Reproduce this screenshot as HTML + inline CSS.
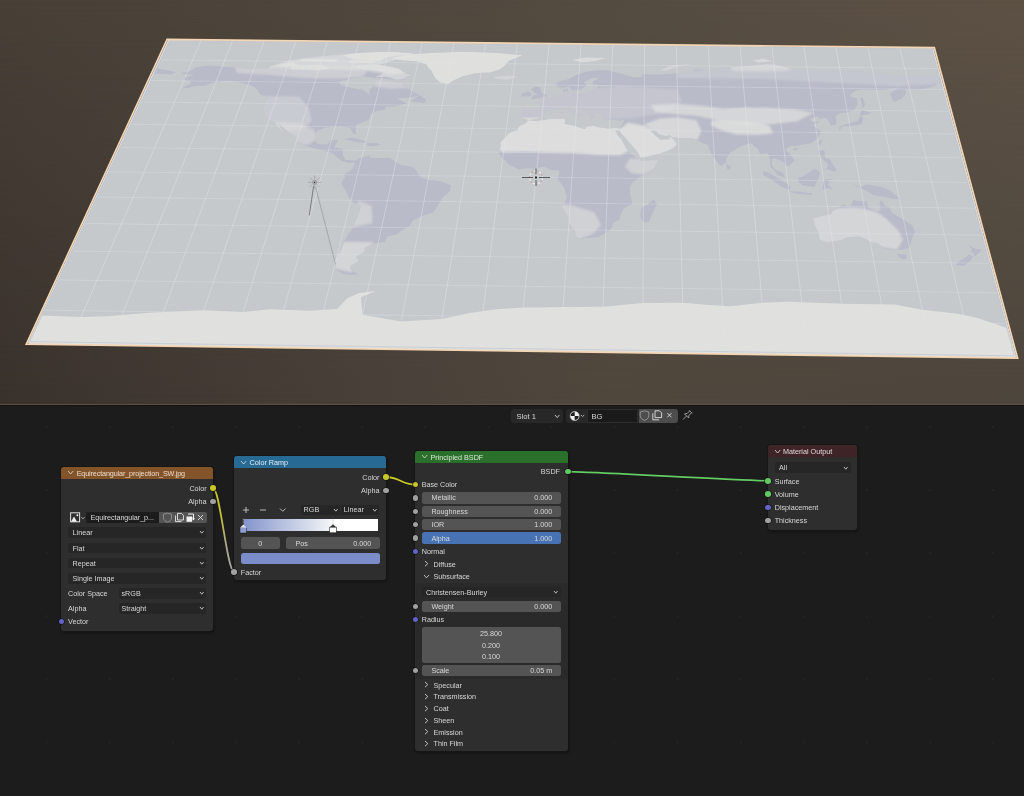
<!DOCTYPE html>
<html><head><meta charset="utf-8">
<style>
*{box-sizing:border-box;margin:0;padding:0}
html,body{width:1024px;height:796px;overflow:hidden;background:#1c1c1c;font-family:"Liberation Sans",sans-serif;}
#vp{position:absolute;left:0;top:0;width:1024px;height:404px;overflow:hidden;background:linear-gradient(90deg,#39322c 0%,#4a423a 40%,#50473d 60%,#4d463d 100%);}
#vptop{position:absolute;left:0;top:0;width:1024px;height:404px;background:linear-gradient(90deg,#484037 0%,#524a40 50%,#5d5144 100%);-webkit-mask-image:linear-gradient(180deg,#000 0%,rgba(0,0,0,0) 100%);mask-image:linear-gradient(180deg,#000 0%,rgba(0,0,0,0) 100%);}
#ov{position:absolute;left:0;top:0}
#sep{position:absolute;left:0;top:404px;width:1024px;height:2px;background:#121110}
#ne{position:absolute;left:0;top:406px;width:1024px;height:390px;background-color:#1c1c1c;background-image:radial-gradient(circle at center,#262626 0px,#232323 0.8px,rgba(28,28,28,0) 1.4px);background-size:63.1px 63.1px;background-position:15.05px -10.55px}
.t{position:absolute;font-size:7.6px;line-height:1;color:#d9d9d9;white-space:nowrap}
.r{text-align:right}
.node{position:absolute;background:#2e2e2e;border-radius:3px;box-shadow:0 0 0 1px #161616, 1px 2px 3px rgba(0,0,0,0.35)}
.hdr{position:absolute;left:0;top:0;right:0;border-radius:3px 3px 0 0}
.sock{position:absolute;width:5.6px;height:5.6px;border-radius:50%;box-shadow:0 0 0 0.6px #111}
.y{background:#c7c72a}.g{background:#a1a1a1}.p{background:#6363c7}.gr{background:#63c763}
.dd{position:absolute;background:#262626;border-radius:2.5px}
.fld{position:absolute;background:#545454;border-radius:2.5px}
</style></head><body>
<div id="vp">
<div id="vptop"></div>
<svg style="position:absolute;left:0;top:0" width="1024" height="404" viewBox="0 0 1024 404"><defs><filter id="bl" x="-5%" y="-5%" width="110%" height="110%"><feGaussianBlur stdDeviation="0.5"/></filter><filter id="bl2" x="-10%" y="-10%" width="120%" height="120%"><feGaussianBlur stdDeviation="1.3"/></filter><clipPath id="landclip"><polygon points="269.89,66.56 289.46,59.96 311.98,56.84 345.01,53.85 377.69,51.54 415.86,52.63 397.04,59.81 378.49,65.04 411.14,73.67 403.01,80.56 370.94,77.39 339.47,72.86 296.55,70.99 269.15,68.61"/><polygon points="180.44,73.15 190.00,71.18 196.09,67.11 209.75,65.48 226.42,67.03 241.20,68.02 253.78,69.13 269.40,67.93 286.20,69.49 307.38,71.11 328.96,71.63 342.64,69.44 350.90,70.91 362.11,69.66 367.69,73.18 357.87,77.25 339.22,81.24 340.39,84.79 350.58,87.75 363.22,90.04 368.72,94.42 369.84,90.12 376.06,83.08 374.69,79.82 385.52,80.36 393.93,81.87 402.36,83.37 403.91,86.23 408.77,89.13 417.63,94.26 420.35,95.01 410.18,97.79 396.68,98.36 399.69,99.85 406.67,103.59 394.82,106.39 385.68,107.02 385.08,109.53 375.62,111.35 370.18,115.02 369.04,119.52 356.32,124.68 355.66,131.58 356.08,134.37 352.88,133.40 350.75,128.44 346.52,127.16 337.57,126.44 325.87,127.38 316.75,131.11 314.45,138.85 317.55,144.07 327.87,144.51 330.14,140.61 338.43,139.92 334.16,146.96 342.94,148.98 342.71,155.05 345.40,159.93 355.18,160.38 355.11,162.49 348.63,162.90 342.05,161.03 336.19,156.59 332.49,153.00 323.75,150.82 315.00,148.80 295.05,141.75 296.52,137.07 288.81,132.32 283.45,127.64 279.47,123.77 279.40,126.06 286.17,136.95 282.49,134.10 279.53,129.13 274.98,122.19 267.85,119.08 265.12,114.53 263.30,110.04 263.48,106.33 266.39,101.22 265.81,98.45 269.88,97.62 259.83,94.61 257.22,89.54 251.10,85.19 243.95,83.69 238.09,81.79 225.37,80.65 212.51,82.63 205.88,85.39 196.82,85.99 187.13,88.02 181.33,88.67 191.44,83.09 190.16,80.96 183.91,80.18 184.04,77.38 195.01,74.71 186.34,74.61"/><polygon points="390.94,58.39 406.87,54.53 430.72,53.06 463.00,51.81 494.87,52.83 522.37,55.14 508.72,61.05 503.67,66.44 498.86,69.82 489.77,72.47 476.62,73.02 462.97,76.34 453.48,80.43 448.44,83.90 439.94,82.39 435.30,78.12 432.88,73.91 431.42,70.44 428.59,68.34 426.22,64.21 416.05,61.37 403.32,60.55"/><polygon points="374.36,64.31 391.09,66.55 399.24,68.70 404.62,73.59 410.98,74.36 403.34,79.16 396.62,79.79 386.38,76.87 375.41,77.03 385.24,72.68 374.92,70.49 360.13,68.95 352.25,66.11"/><polygon points="354.16,59.33 379.54,60.97 386.99,57.00 413.58,53.27 388.33,51.66 355.86,53.30 342.49,55.16"/><polygon points="291.68,66.12 320.34,64.39 329.87,68.61 318.42,70.55 290.52,69.54"/><polygon points="276.84,65.27 293.06,62.04 298.37,65.51 282.82,66.71"/><polygon points="349.68,59.96 375.42,60.24 374.71,62.95 348.91,62.66"/><polygon points="300.62,58.74 337.02,59.14 336.22,61.84 299.95,60.76"/><polygon points="410.53,101.29 424.73,102.92 426.11,99.43 420.67,95.59 415.93,96.98"/><polygon points="343.17,139.51 352.97,137.44 365.84,141.35 366.68,142.62 358.59,142.52 347.66,140.03"/><polygon points="366.60,142.93 377.01,143.06 380.50,144.99 372.74,146.32 366.71,145.30"/><polygon points="355.05,160.86 360.57,157.69 369.36,155.38 369.94,157.81 378.14,157.91 389.93,157.73 394.01,160.53 400.18,164.68 409.35,166.10 414.85,168.14 417.51,172.63 420.16,177.32 429.23,179.94 439.83,180.92 451.08,185.27 450.08,191.21 443.00,197.14 437.82,205.77 432.89,212.75 423.79,215.30 412.90,220.52 409.36,225.89 400.80,231.24 396.30,234.84 387.16,236.56 384.71,242.09 372.98,243.80 364.57,247.43 364.97,251.20 356.03,256.77 358.96,260.63 349.94,266.29 350.53,269.21 346.21,271.09 340.82,272.00 336.40,269.02 334.73,260.31 340.91,250.88 344.95,239.71 353.09,226.97 358.60,214.46 361.22,205.66 350.84,201.17 346.75,193.33 341.73,184.75 341.19,182.21 344.68,178.05 344.57,173.88 350.18,170.64 353.18,168.20 354.90,163.30"/><polygon points="350.39,269.79 358.40,274.19 350.43,275.06 342.93,273.98 336.16,269.98"/><polygon points="528.05,120.19 537.03,121.35 548.64,118.92 564.57,118.51 565.45,121.84 564.17,123.64 575.42,126.06 584.38,129.22 586.82,126.65 593.72,125.82 598.23,127.24 608.48,128.44 614.91,128.05 619.26,128.10 620.79,130.88 615.30,130.20 617.46,134.70 621.93,140.20 625.93,148.12 629.80,152.94 635.60,157.02 639.81,159.01 641.44,161.13 658.41,159.23 657.95,161.33 654.43,167.81 650.87,171.05 641.32,175.90 635.28,180.84 631.64,183.31 629.87,188.36 630.24,195.20 632.53,203.88 623.87,208.14 619.99,216.05 619.90,219.61 613.10,223.12 612.22,227.62 607.07,232.10 599.37,236.59 594.31,237.44 580.41,238.73 576.48,237.21 574.67,229.86 568.86,223.44 568.11,216.27 562.10,207.36 566.93,197.84 564.04,187.54 557.48,179.03 559.14,173.22 559.33,170.75 557.02,169.89 551.06,170.15 544.24,166.78 532.19,168.77 526.30,168.36 519.05,169.59 510.08,165.21 506.23,161.91 502.64,158.62 498.69,152.94 500.90,145.03 500.06,142.65 505.39,137.24 509.43,132.64 517.83,129.66 518.65,126.61 525.93,122.89"/><polygon points="654.04,198.95 656.99,205.07 654.55,208.54 648.88,221.78 643.42,222.61 640.24,216.31 641.55,207.49 647.20,204.94 650.87,201.51"/><polygon points="528.99,119.90 521.45,118.30 522.77,110.84 522.52,109.06 539.43,108.81 540.48,105.14 533.40,102.13 540.22,101.04 547.08,99.37 551.71,97.54 555.27,95.12 563.10,94.49 563.33,91.62 562.84,89.47 568.00,88.53 567.71,92.38 572.09,93.15 575.36,93.91 585.40,93.16 591.04,91.51 592.28,89.09 597.81,89.15 596.83,86.58 606.76,86.41 611.20,85.75 600.20,85.20 592.55,84.12 592.70,81.31 600.51,78.59 592.89,77.81 583.88,81.91 586.97,85.48 581.23,88.96 576.67,91.05 572.85,91.73 570.24,88.13 568.16,86.40 562.53,87.90 557.10,86.84 556.33,83.01 560.90,80.95 568.74,78.93 576.69,74.84 585.60,71.75 598.73,70.25 607.42,70.34 613.89,71.80 618.21,72.81 633.38,77.15 642.13,76.97 642.16,74.19 661.79,74.41 672.68,73.84 677.02,72.92 692.29,73.37 694.30,69.25 702.97,68.94 705.44,74.90 709.55,70.11 720.28,68.17 735.37,66.97 763.28,64.56 771.75,63.02 791.97,68.97 807.29,69.83 827.11,71.43 850.97,71.01 873.06,72.63 895.47,75.37 917.27,75.20 939.56,76.84 941.06,82.44 936.84,83.10 935.38,85.90 927.07,87.93 920.78,89.28 905.31,89.38 905.91,91.96 905.47,94.82 900.89,99.09 894.15,101.92 891.94,98.99 890.00,93.21 892.57,91.81 898.27,87.60 887.66,89.61 881.09,89.96 861.09,89.59 854.79,91.37 849.04,96.33 857.26,98.59 857.37,105.15 853.82,110.25 847.43,112.40 840.77,113.07 835.60,115.99 836.60,122.01 835.91,124.72 830.36,125.72 828.95,121.16 825.73,118.12 817.88,118.78 818.68,116.54 809.92,118.68 812.63,121.73 820.62,121.82 813.07,124.76 817.06,128.61 820.97,131.73 817.39,138.64 811.10,143.25 803.13,144.41 795.22,146.21 791.62,145.38 787.24,147.69 785.15,149.73 788.98,152.48 794.67,160.57 789.35,165.38 785.87,165.99 785.04,162.89 779.29,160.06 773.17,157.89 771.40,163.53 774.85,169.29 783.08,172.69 784.86,177.85 778.61,175.44 775.32,171.44 770.56,166.78 769.72,158.65 767.50,153.01 759.84,153.72 758.22,148.92 753.99,146.03 751.89,143.33 746.17,144.36 740.55,146.81 737.16,148.19 730.47,152.56 726.58,157.65 725.96,162.49 720.74,166.01 718.24,163.69 713.11,156.36 708.71,148.33 708.32,145.16 701.93,142.73 698.38,141.12 693.64,138.25 682.08,138.27 672.82,137.38 670.01,135.33 665.87,136.05 658.94,133.96 655.47,130.53 650.88,130.47 650.88,131.24 655.95,135.94 659.20,138.31 658.97,139.55 669.38,139.21 670.03,136.41 678.25,142.44 673.72,147.90 667.24,151.00 660.71,153.15 652.52,155.62 643.82,157.44 639.82,157.72 638.46,153.04 629.98,143.43 625.46,137.90 620.96,133.20 620.10,130.88 619.49,128.11 621.16,125.84 623.29,122.52 624.04,120.11 619.02,120.65 611.09,119.66 604.28,119.27 601.72,115.49 602.24,114.00 596.59,113.94 593.65,113.90 595.27,117.66 590.64,119.42 589.73,115.35 586.53,111.88 578.80,109.27 573.38,106.26 570.67,106.52 570.98,108.44 574.20,110.70 578.11,112.98 584.13,114.24 579.45,116.73 577.59,117.46 577.78,114.46 570.71,112.14 566.37,109.87 562.71,107.75 557.38,109.61 549.96,109.38 549.80,111.16 543.50,113.32 540.95,116.28 537.29,118.79"/><polygon points="156.69,68.04 166.53,70.22 176.53,72.13 171.15,74.44 154.13,73.55"/><polygon points="531.03,99.18 547.25,97.63 547.90,95.47 544.24,94.27 541.12,92.08 540.41,88.21 538.34,86.91 533.93,86.86 530.95,89.82 533.79,92.28 537.58,94.20 533.70,95.16 532.42,96.73"/><polygon points="530.69,96.28 531.08,92.68 527.87,91.64 522.14,93.30 521.30,96.61"/><polygon points="493.50,76.68 506.78,75.44 515.42,76.23 516.33,77.64 506.20,79.77 496.44,79.09"/><polygon points="571.28,59.71 586.50,57.19 605.77,58.08 594.86,61.33 581.85,62.54"/><polygon points="659.57,70.24 670.35,65.57 694.06,63.38 676.88,67.00 666.10,71.00"/><polygon points="752.07,60.37 762.64,58.47 773.71,61.28 758.75,62.47"/><polygon points="839.27,131.18 841.94,126.62 849.84,125.95 861.01,124.57 863.44,119.31 862.27,115.55 859.60,117.02 858.02,120.75 852.59,122.20 844.99,124.38 839.57,126.14"/><polygon points="859.32,115.52 861.65,109.90 871.22,112.68 867.12,114.86"/><polygon points="862.58,108.88 865.10,104.50 862.57,97.21 860.47,97.91 861.73,104.46"/><polygon points="818.66,144.13 819.89,139.92 822.26,140.26 820.64,144.94"/><polygon points="792.30,149.02 796.58,147.80 797.85,148.61 795.78,150.65"/><polygon points="726.48,163.31 731.00,167.11 729.27,169.55 726.83,168.70"/><polygon points="763.36,170.79 770.04,173.35 785.41,182.71 790.62,186.14 789.91,190.37 781.06,186.87 771.92,180.03 763.04,174.92"/><polygon points="790.01,191.22 800.98,191.87 812.06,193.21 812.29,194.92 798.81,193.90 790.11,192.08"/><polygon points="798.02,177.85 801.50,177.06 808.13,173.00 814.71,168.96 819.95,172.32 818.51,178.93 815.61,183.92 814.88,187.29 802.58,185.45 798.54,182.03"/><polygon points="822.50,189.93 823.43,179.83 835.18,178.31 827.16,180.71 831.02,182.44 827.66,184.07 833.40,190.07 827.01,187.78"/><polygon points="850.28,182.68 860.66,187.02 867.39,184.23 882.42,187.29 891.75,191.65 900.65,199.48 891.92,198.50 881.82,196.66 871.76,194.81 868.85,192.21"/><polygon points="819.12,150.45 824.51,150.52 824.89,157.72 829.85,159.39 836.13,169.23 835.33,171.68 826.61,169.11 828.24,164.23 822.78,159.30 819.24,154.44"/><polygon points="813.02,218.53 815.22,225.73 818.71,233.04 819.59,239.47 826.29,242.33 839.86,240.29 847.00,237.62 859.35,236.31 870.41,241.99 878.17,243.01 884.29,248.68 894.57,249.38 902.29,249.86 909.54,248.08 911.58,239.75 914.86,231.55 912.32,225.55 900.78,217.88 892.45,213.34 889.25,207.15 884.73,205.35 881.20,199.75 879.49,203.54 880.82,210.55 876.06,211.37 868.76,207.76 866.92,201.64 853.26,200.26 850.66,206.66 843.01,204.82 832.90,210.82 830.96,214.32 820.16,216.49"/><polygon points="897.25,253.93 906.52,254.43 906.65,258.79 902.95,259.50 898.50,256.40"/><polygon points="965.84,243.05 971.41,247.03 975.72,248.95 982.18,249.41 979.15,252.37 975.12,256.47 973.12,252.67 970.93,252.08 971.90,248.90"/><polygon points="968.75,254.50 973.33,256.45 970.97,260.21 966.79,263.98 962.16,266.03 955.42,264.79 959.64,261.02 966.30,256.92"/></clipPath></defs><polygon points="167.9,40.1 933.5,48.2 1016.5,357.2 27.5,343.3" fill="#d9dbde"/><polygon points="169.70,40.03 931.89,48.35 1014.70,356.11 29.42,341.93" fill="#c5c9cc"/><g filter="url(#bl)"><polygon points="269.89,66.56 289.46,59.96 311.98,56.84 345.01,53.85 377.69,51.54 415.86,52.63 397.04,59.81 378.49,65.04 411.14,73.67 403.01,80.56 370.94,77.39 339.47,72.86 296.55,70.99 269.15,68.61" fill="#b9bbc9"/><polygon points="180.44,73.15 190.00,71.18 196.09,67.11 209.75,65.48 226.42,67.03 241.20,68.02 253.78,69.13 269.40,67.93 286.20,69.49 307.38,71.11 328.96,71.63 342.64,69.44 350.90,70.91 362.11,69.66 367.69,73.18 357.87,77.25 339.22,81.24 340.39,84.79 350.58,87.75 363.22,90.04 368.72,94.42 369.84,90.12 376.06,83.08 374.69,79.82 385.52,80.36 393.93,81.87 402.36,83.37 403.91,86.23 408.77,89.13 417.63,94.26 420.35,95.01 410.18,97.79 396.68,98.36 399.69,99.85 406.67,103.59 394.82,106.39 385.68,107.02 385.08,109.53 375.62,111.35 370.18,115.02 369.04,119.52 356.32,124.68 355.66,131.58 356.08,134.37 352.88,133.40 350.75,128.44 346.52,127.16 337.57,126.44 325.87,127.38 316.75,131.11 314.45,138.85 317.55,144.07 327.87,144.51 330.14,140.61 338.43,139.92 334.16,146.96 342.94,148.98 342.71,155.05 345.40,159.93 355.18,160.38 355.11,162.49 348.63,162.90 342.05,161.03 336.19,156.59 332.49,153.00 323.75,150.82 315.00,148.80 295.05,141.75 296.52,137.07 288.81,132.32 283.45,127.64 279.47,123.77 279.40,126.06 286.17,136.95 282.49,134.10 279.53,129.13 274.98,122.19 267.85,119.08 265.12,114.53 263.30,110.04 263.48,106.33 266.39,101.22 265.81,98.45 269.88,97.62 259.83,94.61 257.22,89.54 251.10,85.19 243.95,83.69 238.09,81.79 225.37,80.65 212.51,82.63 205.88,85.39 196.82,85.99 187.13,88.02 181.33,88.67 191.44,83.09 190.16,80.96 183.91,80.18 184.04,77.38 195.01,74.71 186.34,74.61" fill="#b9bbc9"/><polygon points="390.94,58.39 406.87,54.53 430.72,53.06 463.00,51.81 494.87,52.83 522.37,55.14 508.72,61.05 503.67,66.44 498.86,69.82 489.77,72.47 476.62,73.02 462.97,76.34 453.48,80.43 448.44,83.90 439.94,82.39 435.30,78.12 432.88,73.91 431.42,70.44 428.59,68.34 426.22,64.21 416.05,61.37 403.32,60.55" fill="#b9bbc9"/><polygon points="374.36,64.31 391.09,66.55 399.24,68.70 404.62,73.59 410.98,74.36 403.34,79.16 396.62,79.79 386.38,76.87 375.41,77.03 385.24,72.68 374.92,70.49 360.13,68.95 352.25,66.11" fill="#b9bbc9"/><polygon points="354.16,59.33 379.54,60.97 386.99,57.00 413.58,53.27 388.33,51.66 355.86,53.30 342.49,55.16" fill="#b9bbc9"/><polygon points="291.68,66.12 320.34,64.39 329.87,68.61 318.42,70.55 290.52,69.54" fill="#b9bbc9"/><polygon points="276.84,65.27 293.06,62.04 298.37,65.51 282.82,66.71" fill="#b9bbc9"/><polygon points="349.68,59.96 375.42,60.24 374.71,62.95 348.91,62.66" fill="#b9bbc9"/><polygon points="300.62,58.74 337.02,59.14 336.22,61.84 299.95,60.76" fill="#b9bbc9"/><polygon points="410.53,101.29 424.73,102.92 426.11,99.43 420.67,95.59 415.93,96.98" fill="#b9bbc9"/><polygon points="343.17,139.51 352.97,137.44 365.84,141.35 366.68,142.62 358.59,142.52 347.66,140.03" fill="#b9bbc9"/><polygon points="366.60,142.93 377.01,143.06 380.50,144.99 372.74,146.32 366.71,145.30" fill="#b9bbc9"/><polygon points="355.05,160.86 360.57,157.69 369.36,155.38 369.94,157.81 378.14,157.91 389.93,157.73 394.01,160.53 400.18,164.68 409.35,166.10 414.85,168.14 417.51,172.63 420.16,177.32 429.23,179.94 439.83,180.92 451.08,185.27 450.08,191.21 443.00,197.14 437.82,205.77 432.89,212.75 423.79,215.30 412.90,220.52 409.36,225.89 400.80,231.24 396.30,234.84 387.16,236.56 384.71,242.09 372.98,243.80 364.57,247.43 364.97,251.20 356.03,256.77 358.96,260.63 349.94,266.29 350.53,269.21 346.21,271.09 340.82,272.00 336.40,269.02 334.73,260.31 340.91,250.88 344.95,239.71 353.09,226.97 358.60,214.46 361.22,205.66 350.84,201.17 346.75,193.33 341.73,184.75 341.19,182.21 344.68,178.05 344.57,173.88 350.18,170.64 353.18,168.20 354.90,163.30" fill="#b9bbc9"/><polygon points="350.39,269.79 358.40,274.19 350.43,275.06 342.93,273.98 336.16,269.98" fill="#b9bbc9"/><polygon points="528.05,120.19 537.03,121.35 548.64,118.92 564.57,118.51 565.45,121.84 564.17,123.64 575.42,126.06 584.38,129.22 586.82,126.65 593.72,125.82 598.23,127.24 608.48,128.44 614.91,128.05 619.26,128.10 620.79,130.88 615.30,130.20 617.46,134.70 621.93,140.20 625.93,148.12 629.80,152.94 635.60,157.02 639.81,159.01 641.44,161.13 658.41,159.23 657.95,161.33 654.43,167.81 650.87,171.05 641.32,175.90 635.28,180.84 631.64,183.31 629.87,188.36 630.24,195.20 632.53,203.88 623.87,208.14 619.99,216.05 619.90,219.61 613.10,223.12 612.22,227.62 607.07,232.10 599.37,236.59 594.31,237.44 580.41,238.73 576.48,237.21 574.67,229.86 568.86,223.44 568.11,216.27 562.10,207.36 566.93,197.84 564.04,187.54 557.48,179.03 559.14,173.22 559.33,170.75 557.02,169.89 551.06,170.15 544.24,166.78 532.19,168.77 526.30,168.36 519.05,169.59 510.08,165.21 506.23,161.91 502.64,158.62 498.69,152.94 500.90,145.03 500.06,142.65 505.39,137.24 509.43,132.64 517.83,129.66 518.65,126.61 525.93,122.89" fill="#b9bbc9"/><polygon points="654.04,198.95 656.99,205.07 654.55,208.54 648.88,221.78 643.42,222.61 640.24,216.31 641.55,207.49 647.20,204.94 650.87,201.51" fill="#b9bbc9"/><polygon points="528.99,119.90 521.45,118.30 522.77,110.84 522.52,109.06 539.43,108.81 540.48,105.14 533.40,102.13 540.22,101.04 547.08,99.37 551.71,97.54 555.27,95.12 563.10,94.49 563.33,91.62 562.84,89.47 568.00,88.53 567.71,92.38 572.09,93.15 575.36,93.91 585.40,93.16 591.04,91.51 592.28,89.09 597.81,89.15 596.83,86.58 606.76,86.41 611.20,85.75 600.20,85.20 592.55,84.12 592.70,81.31 600.51,78.59 592.89,77.81 583.88,81.91 586.97,85.48 581.23,88.96 576.67,91.05 572.85,91.73 570.24,88.13 568.16,86.40 562.53,87.90 557.10,86.84 556.33,83.01 560.90,80.95 568.74,78.93 576.69,74.84 585.60,71.75 598.73,70.25 607.42,70.34 613.89,71.80 618.21,72.81 633.38,77.15 642.13,76.97 642.16,74.19 661.79,74.41 672.68,73.84 677.02,72.92 692.29,73.37 694.30,69.25 702.97,68.94 705.44,74.90 709.55,70.11 720.28,68.17 735.37,66.97 763.28,64.56 771.75,63.02 791.97,68.97 807.29,69.83 827.11,71.43 850.97,71.01 873.06,72.63 895.47,75.37 917.27,75.20 939.56,76.84 941.06,82.44 936.84,83.10 935.38,85.90 927.07,87.93 920.78,89.28 905.31,89.38 905.91,91.96 905.47,94.82 900.89,99.09 894.15,101.92 891.94,98.99 890.00,93.21 892.57,91.81 898.27,87.60 887.66,89.61 881.09,89.96 861.09,89.59 854.79,91.37 849.04,96.33 857.26,98.59 857.37,105.15 853.82,110.25 847.43,112.40 840.77,113.07 835.60,115.99 836.60,122.01 835.91,124.72 830.36,125.72 828.95,121.16 825.73,118.12 817.88,118.78 818.68,116.54 809.92,118.68 812.63,121.73 820.62,121.82 813.07,124.76 817.06,128.61 820.97,131.73 817.39,138.64 811.10,143.25 803.13,144.41 795.22,146.21 791.62,145.38 787.24,147.69 785.15,149.73 788.98,152.48 794.67,160.57 789.35,165.38 785.87,165.99 785.04,162.89 779.29,160.06 773.17,157.89 771.40,163.53 774.85,169.29 783.08,172.69 784.86,177.85 778.61,175.44 775.32,171.44 770.56,166.78 769.72,158.65 767.50,153.01 759.84,153.72 758.22,148.92 753.99,146.03 751.89,143.33 746.17,144.36 740.55,146.81 737.16,148.19 730.47,152.56 726.58,157.65 725.96,162.49 720.74,166.01 718.24,163.69 713.11,156.36 708.71,148.33 708.32,145.16 701.93,142.73 698.38,141.12 693.64,138.25 682.08,138.27 672.82,137.38 670.01,135.33 665.87,136.05 658.94,133.96 655.47,130.53 650.88,130.47 650.88,131.24 655.95,135.94 659.20,138.31 658.97,139.55 669.38,139.21 670.03,136.41 678.25,142.44 673.72,147.90 667.24,151.00 660.71,153.15 652.52,155.62 643.82,157.44 639.82,157.72 638.46,153.04 629.98,143.43 625.46,137.90 620.96,133.20 620.10,130.88 619.49,128.11 621.16,125.84 623.29,122.52 624.04,120.11 619.02,120.65 611.09,119.66 604.28,119.27 601.72,115.49 602.24,114.00 596.59,113.94 593.65,113.90 595.27,117.66 590.64,119.42 589.73,115.35 586.53,111.88 578.80,109.27 573.38,106.26 570.67,106.52 570.98,108.44 574.20,110.70 578.11,112.98 584.13,114.24 579.45,116.73 577.59,117.46 577.78,114.46 570.71,112.14 566.37,109.87 562.71,107.75 557.38,109.61 549.96,109.38 549.80,111.16 543.50,113.32 540.95,116.28 537.29,118.79" fill="#b9bbc9"/><polygon points="156.69,68.04 166.53,70.22 176.53,72.13 171.15,74.44 154.13,73.55" fill="#b9bbc9"/><polygon points="531.03,99.18 547.25,97.63 547.90,95.47 544.24,94.27 541.12,92.08 540.41,88.21 538.34,86.91 533.93,86.86 530.95,89.82 533.79,92.28 537.58,94.20 533.70,95.16 532.42,96.73" fill="#b9bbc9"/><polygon points="530.69,96.28 531.08,92.68 527.87,91.64 522.14,93.30 521.30,96.61" fill="#b9bbc9"/><polygon points="493.50,76.68 506.78,75.44 515.42,76.23 516.33,77.64 506.20,79.77 496.44,79.09" fill="#b9bbc9"/><polygon points="571.28,59.71 586.50,57.19 605.77,58.08 594.86,61.33 581.85,62.54" fill="#b9bbc9"/><polygon points="659.57,70.24 670.35,65.57 694.06,63.38 676.88,67.00 666.10,71.00" fill="#b9bbc9"/><polygon points="752.07,60.37 762.64,58.47 773.71,61.28 758.75,62.47" fill="#b9bbc9"/><polygon points="839.27,131.18 841.94,126.62 849.84,125.95 861.01,124.57 863.44,119.31 862.27,115.55 859.60,117.02 858.02,120.75 852.59,122.20 844.99,124.38 839.57,126.14" fill="#b9bbc9"/><polygon points="859.32,115.52 861.65,109.90 871.22,112.68 867.12,114.86" fill="#b9bbc9"/><polygon points="862.58,108.88 865.10,104.50 862.57,97.21 860.47,97.91 861.73,104.46" fill="#b9bbc9"/><polygon points="818.66,144.13 819.89,139.92 822.26,140.26 820.64,144.94" fill="#b9bbc9"/><polygon points="792.30,149.02 796.58,147.80 797.85,148.61 795.78,150.65" fill="#b9bbc9"/><polygon points="726.48,163.31 731.00,167.11 729.27,169.55 726.83,168.70" fill="#b9bbc9"/><polygon points="763.36,170.79 770.04,173.35 785.41,182.71 790.62,186.14 789.91,190.37 781.06,186.87 771.92,180.03 763.04,174.92" fill="#b9bbc9"/><polygon points="790.01,191.22 800.98,191.87 812.06,193.21 812.29,194.92 798.81,193.90 790.11,192.08" fill="#b9bbc9"/><polygon points="798.02,177.85 801.50,177.06 808.13,173.00 814.71,168.96 819.95,172.32 818.51,178.93 815.61,183.92 814.88,187.29 802.58,185.45 798.54,182.03" fill="#b9bbc9"/><polygon points="822.50,189.93 823.43,179.83 835.18,178.31 827.16,180.71 831.02,182.44 827.66,184.07 833.40,190.07 827.01,187.78" fill="#b9bbc9"/><polygon points="850.28,182.68 860.66,187.02 867.39,184.23 882.42,187.29 891.75,191.65 900.65,199.48 891.92,198.50 881.82,196.66 871.76,194.81 868.85,192.21" fill="#b9bbc9"/><polygon points="819.12,150.45 824.51,150.52 824.89,157.72 829.85,159.39 836.13,169.23 835.33,171.68 826.61,169.11 828.24,164.23 822.78,159.30 819.24,154.44" fill="#b9bbc9"/><polygon points="813.02,218.53 815.22,225.73 818.71,233.04 819.59,239.47 826.29,242.33 839.86,240.29 847.00,237.62 859.35,236.31 870.41,241.99 878.17,243.01 884.29,248.68 894.57,249.38 902.29,249.86 909.54,248.08 911.58,239.75 914.86,231.55 912.32,225.55 900.78,217.88 892.45,213.34 889.25,207.15 884.73,205.35 881.20,199.75 879.49,203.54 880.82,210.55 876.06,211.37 868.76,207.76 866.92,201.64 853.26,200.26 850.66,206.66 843.01,204.82 832.90,210.82 830.96,214.32 820.16,216.49" fill="#b9bbc9"/><polygon points="897.25,253.93 906.52,254.43 906.65,258.79 902.95,259.50 898.50,256.40" fill="#b9bbc9"/><polygon points="965.84,243.05 971.41,247.03 975.72,248.95 982.18,249.41 979.15,252.37 975.12,256.47 973.12,252.67 970.93,252.08 971.90,248.90" fill="#b9bbc9"/><polygon points="968.75,254.50 973.33,256.45 970.97,260.21 966.79,263.98 962.16,266.03 955.42,264.79 959.64,261.02 966.30,256.92" fill="#b9bbc9"/></g><g clip-path="url(#landclip)"><g filter="url(#bl2)"><polygon points="519.00,119.78 520.41,107.85 532.44,100.66 555.52,92.25 589.01,88.34 622.22,85.88 677.42,89.35 682.18,100.93 666.69,112.52 632.71,118.10 598.53,120.71 564.67,117.30" fill="#dedfdd" opacity="0.3"/><polygon points="677.01,72.50 720.24,67.49 763.07,62.52 850.58,68.94 938.81,74.06 941.44,83.85 897.94,86.18 831.16,82.60 764.82,79.05 720.96,78.55 677.15,78.06" fill="#dedfdd" opacity="0.35"/><polygon points="266.32,64.47 289.69,59.29 312.19,56.17 345.21,53.18 377.86,50.88 420.27,52.01 401.33,59.85 382.97,64.41 411.45,72.29 393.42,74.86 361.92,70.35 329.66,69.29 297.46,68.24 269.65,67.24" fill="#dedfdd" opacity="0.75"/><polygon points="492.45,147.30 495.04,128.62 519.18,118.27 564.67,117.30 586.99,123.61 616.59,125.48 623.26,133.22 632.21,148.99 620.37,155.23 596.93,154.94 573.60,153.06 550.21,152.77 526.92,151.69 503.47,152.20" fill="#dedfdd" opacity="0.92"/><polygon points="618.75,130.09 632.23,147.40 639.11,158.67 662.63,157.35 678.77,144.81 671.65,136.90 655.47,130.53 644.02,125.80 628.08,122.58" fill="#dedfdd" opacity="0.92"/><polygon points="644.03,124.28 660.08,133.66 674.00,138.48 697.19,140.32 701.41,131.07 696.38,120.36 678.10,117.14 659.96,118.42" fill="#dedfdd" opacity="0.8"/><polygon points="650.88,104.95 677.77,103.80 700.27,105.52 722.93,108.73 745.34,107.52 767.86,107.78 795.09,109.57 813.59,112.75 796.66,121.54 769.61,124.25 746.88,125.50 723.80,122.19 712.24,119.04 696.20,115.85 673.50,114.09 655.39,112.39" fill="#dedfdd" opacity="0.75"/><polygon points="804.11,216.64 823.17,211.57 837.42,208.24 852.04,207.55 862.03,208.55 872.19,210.44 880.26,214.07 889.08,221.30 898.37,230.43 902.74,239.64 897.19,249.79 878.85,246.74 862.35,239.11 845.26,242.58 815.16,244.04 805.47,227.41" fill="#dedfdd" opacity="0.72"/><polygon points="558.03,202.93 577.34,206.67 594.24,212.17 601.11,224.76 593.23,233.75 575.25,240.89 566.19,226.12" fill="#dedfdd" opacity="0.6"/><polygon points="265.96,96.12 299.20,96.51 308.88,108.34 311.52,121.87 302.36,129.40 283.09,132.25 267.92,122.87 260.80,110.75" fill="#dedfdd" opacity="0.45"/><polygon points="338.21,241.48 373.40,241.94 366.62,260.74 351.12,272.14 331.51,267.98" fill="#dedfdd" opacity="0.7"/><polygon points="358.34,200.39 371.71,205.80 372.54,223.60 351.85,226.95" fill="#dedfdd" opacity="0.6"/><polygon points="272.97,121.41 299.70,123.25 313.78,129.53 317.91,138.89 306.80,145.05 293.90,141.74 282.59,133.80 275.98,126.02" fill="#dedfdd" opacity="0.55"/><polygon points="233.80,64.79 287.60,65.39 341.47,65.99 368.78,69.04 362.23,77.30 337.85,78.42 305.14,78.05 266.93,74.82 237.07,73.09" fill="#dedfdd" opacity="0.55"/><polygon points="370.58,78.79 400.83,80.54 407.99,87.70 390.04,88.92 373.14,85.88" fill="#dedfdd" opacity="0.5"/><polygon points="712.32,120.55 746.49,120.95 769.77,125.77 772.88,133.46 759.20,134.85 736.13,134.57 719.71,129.76 710.28,125.06" fill="#dedfdd" opacity="0.85"/><polygon points="730.68,62.16 763.07,62.52 796.04,66.97 785.71,70.96 753.12,71.29 731.29,70.36" fill="#dedfdd" opacity="0.6"/><polygon points="629.70,158.56 641.46,158.70 660.29,158.93 655.62,168.64 643.71,175.10 631.81,173.30 624.81,166.63" fill="#dedfdd" opacity="0.6"/></g></g><path d="M201.20 40.37L70.03 342.51 M232.71 40.72L110.68 343.10 M264.25 41.06L151.37 343.68 M295.82 41.41L192.10 344.27 M327.40 41.75L232.86 344.85 M359.01 42.10L273.67 345.44 M390.64 42.44L314.51 346.03 M422.30 42.79L355.39 346.62 M453.97 43.13L396.31 347.21 M485.67 43.48L437.26 347.80 M517.40 43.83L478.26 348.39 M549.14 44.17L519.29 348.98 M580.91 44.52L560.36 349.57 M612.70 44.87L601.47 350.16 M644.52 45.21L642.62 350.75 M676.35 45.56L683.81 351.35 M708.22 45.91L725.04 351.94 M740.10 46.26L766.30 352.53 M772.01 46.61L807.60 353.13 M803.94 46.95L848.95 353.72 M835.89 47.30L890.33 354.32 M867.87 47.65L931.75 354.92 M899.87 48.00L973.21 355.51" stroke="#e6e8ec" stroke-width="1" fill="none" opacity="0.42"/><path d="M160.48 59.88L937.32 68.54 M150.89 80.51L942.97 89.53 M140.92 101.96L948.85 111.36 M130.55 124.29L954.96 134.09 M119.74 147.54L961.33 157.77 M108.48 171.78L967.98 182.46 M96.73 197.06L974.91 208.24 M84.46 223.47L982.16 235.17 M71.63 251.07L989.74 263.33 M58.21 279.95L997.67 292.81 M44.16 310.20L1005.98 323.70" stroke="#e6e8ec" stroke-width="0.8" fill="none" opacity="0.38"/><g filter="url(#bl)"><polygon points="390.94,58.39 406.87,54.53 430.72,53.06 463.00,51.81 494.87,52.83 522.37,55.14 508.72,61.05 503.67,66.44 498.86,69.82 489.77,72.47 476.62,73.02 462.97,76.34 453.48,80.43 448.44,83.90 439.94,82.39 435.30,78.12 432.88,73.91 431.42,70.44 428.59,68.34 426.22,64.21 416.05,61.37 403.32,60.55" fill="#e2e2df" opacity="0.93"/><polygon points="28.41,344.10 1015.30,358.33 1007.12,327.93 977.67,318.07 957.88,313.64 922.33,309.64 894.76,304.54 841.62,303.81 788.40,301.64 762.04,302.71 730.49,306.36 709.20,305.04 682.62,302.63 642.92,303.10 603.07,306.64 563.22,307.12 523.35,307.59 496.58,309.28 469.46,313.05 441.86,318.92 401.18,321.50 362.43,314.67 361.01,297.16 375.53,290.90 359.30,293.09 347.65,297.99 337.06,309.12 310.03,310.82 270.56,309.23 243.13,311.96 203.71,310.37 149.59,312.73 108.12,316.32 81.11,316.99 41.75,315.39" fill="#e2e2df" opacity="0.93"/><polygon points="354.16,59.33 379.54,60.97 386.99,57.00 413.58,53.27 388.33,51.66 355.86,53.30 342.49,55.16" fill="#e2e2df" opacity="0.85"/><polygon points="349.68,59.96 375.42,60.24 374.71,62.95 348.91,62.66" fill="#e2e2df" opacity="0.75"/><polygon points="300.62,58.74 337.02,59.14 336.22,61.84 299.95,60.76" fill="#e2e2df" opacity="0.8"/><polygon points="571.28,59.71 586.50,57.19 605.77,58.08 594.86,61.33 581.85,62.54" fill="#e2e2df" opacity="0.8"/><polygon points="752.07,60.37 762.64,58.47 773.71,61.28 758.75,62.47" fill="#e2e2df" opacity="0.7"/><polygon points="291.68,66.12 320.34,64.39 329.87,68.61 318.42,70.55 290.52,69.54" fill="#e2e2df" opacity="0.65"/><polygon points="276.84,65.27 293.06,62.04 298.37,65.51 282.82,66.71" fill="#e2e2df" opacity="0.7"/><polygon points="374.36,64.31 391.09,66.55 399.24,68.70 404.62,73.59 410.98,74.36 403.34,79.16 396.62,79.79 386.38,76.87 375.41,77.03 385.24,72.68 374.92,70.49 360.13,68.95 352.25,66.11" fill="#e2e2df" opacity="0.6"/><polygon points="659.57,70.24 670.35,65.57 694.06,63.38 676.88,67.00 666.10,71.00" fill="#e2e2df" opacity="0.6"/><polygon points="493.50,76.68 506.78,75.44 515.42,76.23 516.33,77.64 506.20,79.77 496.44,79.09" fill="#e2e2df" opacity="0.6"/></g><polygon points="169.89,40.19 931.67,48.51 1014.28,355.83 29.88,341.66" fill="none" stroke="#b9c3d2" stroke-width="0.8" opacity="0.8"/></svg>
<svg id="ov" width="1024" height="404">
<polygon points="167.1,39.4 934.3,47.6 1017.6,358.2 26.3,344.1" fill="none" stroke="#f4d6b4" stroke-width="1.7"/>
<!-- light -->
<g stroke="#4a4a4a">
<line x1="313.6" y1="186" x2="309.3" y2="215.4" stroke-width="0.8" opacity="0.75"/>
<line x1="315.6" y1="187" x2="335.6" y2="264.5" stroke-width="0.5" opacity="0.55"/>
</g>
<g stroke="#777" stroke-width="0.5" opacity="0.75">
<path d="M314.6 175.5v4M314.6 185v4M307.8 182.3h4M317.4 182.3h4M309.8 177.5l2.6 2.6M316.8 184.5l2.6 2.6M319.4 177.5l-2.6 2.6M312.4 184.5l-2.6 2.6"/>
</g>
<circle cx="314.6" cy="182.3" r="2" fill="none" stroke="#666" stroke-width="0.5"/>
<circle cx="314.6" cy="182.3" r="0.9" fill="#3a3a3a"/>
<!-- 3d cursor -->
<circle cx="536" cy="177.5" r="6.5" fill="none" stroke="#f4f0f0" stroke-width="1.2" stroke-dasharray="3 2.5" opacity="0.8"/>
<circle cx="536" cy="177.5" r="6.5" fill="none" stroke="#c86060" stroke-width="1.2" stroke-dasharray="2.5 3" stroke-dashoffset="3" opacity="0.35"/>
<path d="M522 177.5h11M539 177.5h11M536 168.4v6M536 180v6" stroke="#333" stroke-width="0.9" opacity="0.85"/>
<rect x="535" y="176.5" width="2" height="2" fill="#222"/>
</svg>
</div>
<div id="sep"></div><div style="position:absolute;left:0;top:403.6px;width:1024px;height:1px;background:#5a5349"></div>
<div id="ne"></div>
<div id="nodes" style="position:absolute;left:0;top:0;width:1024px;height:796px;will-change:transform">
<svg style="position:absolute;left:0;top:406px" width="1024" height="390" viewBox="0 406 1024 390">
<path d="M213 487.8C220 487.8 227 571.8 234.1 571.8" fill="none" stroke="#111" stroke-width="2.6" opacity="0.6"/>
<path d="M213 487.8C220 487.8 227 571.8 234.1 571.8" fill="none" stroke="url(#lg1)" stroke-width="1.8"/>
<path d="M385.8 477C400 477 401 484.7 415.5 484.7" fill="none" stroke="#111" stroke-width="2.6" opacity="0.6"/>
<path d="M385.8 477C400 477 401 484.7 415.5 484.7" fill="none" stroke="#c7c72a" stroke-width="1.8"/>
<path d="M568 471.7C590 471.7 745 480.8 768 480.8" fill="none" stroke="#111" stroke-width="2.6" opacity="0.6"/>
<path d="M568 471.7C590 471.7 745 480.8 768 480.8" fill="none" stroke="#66cc66" stroke-width="1.7"/>
<defs><linearGradient id="lg1" x1="0" y1="487" x2="0" y2="572" gradientUnits="userSpaceOnUse"><stop offset="0" stop-color="#c7c72a"/><stop offset="0.35" stop-color="#c0c03a"/><stop offset="0.7" stop-color="#a9a98f"/><stop offset="1" stop-color="#a6a6a6"/></linearGradient></defs>
</svg>
<div class="node" style="position:absolute;left:61.00px;top:467.00px;width:152.00px;height:163.50px;"></div>
<div class="hdr" style="position:absolute;left:61.00px;top:467.00px;width:152.00px;height:12.20px;background:#83532a;position:absolute;"></div>
<svg style="position:absolute;left:67.40px;top:470.40px" width="7.2" height="5"><path d="M1 1L3.6 4L6.2 1" fill="none" stroke="#d0d0d0" stroke-width="0.9"/></svg>
<div class="t" style="top:470.11px;font-size:7.2px;color:#ecdccb;left:76.70px;letter-spacing:-0.12px;">Equirectangular_projection_SW.jpg</div>
<div class="t" style="top:484.81px;font-size:7.2px;left:-93.40px;width:300px;text-align:right;">Color</div>
<div class="sock y" style="left:210.20px;top:485.00px"></div>
<div class="t" style="top:497.71px;font-size:7.2px;left:-93.40px;width:300px;text-align:right;">Alpha</div>
<div class="sock g" style="left:210.20px;top:498.50px"></div>
<div class="" style="position:absolute;left:85.80px;top:512.00px;width:72.95px;height:10.60px;background:#1c1c1c;border-radius:2px 0 0 2px;"></div>
<div class="" style="position:absolute;left:158.75px;top:512.00px;width:48.05px;height:10.60px;background:#545454;border-radius:0 2px 2px 0;"></div>
<svg style="position:absolute;left:69px;top:511px" width="18" height="13">
<rect x="1.6" y="1.8" width="9" height="9" fill="none" stroke="#e0e0e0" stroke-width="1"/>
<path d="M2 10.8L5 5.6L8 10.8Z" fill="#f0f0f0"/><circle cx="8.3" cy="4.2" r="1" fill="#f0f0f0"/>
<path d="M12.5 6.2L14 7.8L15.5 6.2" fill="none" stroke="#d0d0d0" stroke-width="0.8"/></svg>
<div class="t" style="top:514.11px;font-size:7.2px;left:90.50px;letter-spacing:-0.05px;">Equirectangular_p...</div>
<svg style="position:absolute;left:158.75px;top:512px" width="48" height="11">
<path d="M4.5 2.2L8.5 1.2L12.5 2.2V6C12.5 8 10.5 9.5 8.5 10.2C6.5 9.5 4.5 8 4.5 6Z" fill="none" stroke="#9a9a9a" stroke-width="0.8"/>
<path d="M16.5 3.5V9.6H22.5M18.5 1.4H22.5L24.5 3.4V8H18.5Z" fill="none" stroke="#e8e8e8" stroke-width="0.9"/>
<path d="M27.5 4.5H33V9.8H27.5Z" fill="#f2f2f2"/><path d="M29 2H34.5V7.5" fill="none" stroke="#f2f2f2" stroke-width="1"/><path d="M33.5 5L36 6.8L33.5 8.6Z" fill="#f2f2f2"/>
<path d="M39 3L44 8M44 3L39 8" stroke="#e0e0e0" stroke-width="0.9"/></svg>
<div class="dd" style="position:absolute;left:68.25px;top:527.00px;width:138.15px;height:10.50px;"></div>
<div class="t" style="top:529.01px;font-size:7.2px;left:72.55px;">Linear</div>
<svg style="position:absolute;left:198.80px;top:530.45px" width="5.6" height="4.2"><path d="M1 1L2.8 3.2L4.6 1" fill="none" stroke="#d0d0d0" stroke-width="0.9"/></svg>
<div class="dd" style="position:absolute;left:68.25px;top:542.60px;width:138.15px;height:10.50px;"></div>
<div class="t" style="top:544.61px;font-size:7.2px;left:72.55px;">Flat</div>
<svg style="position:absolute;left:198.80px;top:546.05px" width="5.6" height="4.2"><path d="M1 1L2.8 3.2L4.6 1" fill="none" stroke="#d0d0d0" stroke-width="0.9"/></svg>
<div class="dd" style="position:absolute;left:68.25px;top:557.60px;width:138.15px;height:10.50px;"></div>
<div class="t" style="top:559.61px;font-size:7.2px;left:72.55px;">Repeat</div>
<svg style="position:absolute;left:198.80px;top:561.05px" width="5.6" height="4.2"><path d="M1 1L2.8 3.2L4.6 1" fill="none" stroke="#d0d0d0" stroke-width="0.9"/></svg>
<div class="dd" style="position:absolute;left:68.25px;top:573.00px;width:138.15px;height:10.50px;"></div>
<div class="t" style="top:575.01px;font-size:7.2px;left:72.55px;">Single Image</div>
<svg style="position:absolute;left:198.80px;top:576.45px" width="5.6" height="4.2"><path d="M1 1L2.8 3.2L4.6 1" fill="none" stroke="#d0d0d0" stroke-width="0.9"/></svg>
<div class="t" style="top:590.11px;font-size:7.2px;left:68.00px;">Color Space</div>
<div class="dd" style="position:absolute;left:118.50px;top:588.00px;width:87.90px;height:10.50px;"></div>
<div class="t" style="top:590.01px;font-size:7.2px;left:121.50px;">sRGB</div>
<svg style="position:absolute;left:198.80px;top:591.45px" width="5.6" height="4.2"><path d="M1 1L2.8 3.2L4.6 1" fill="none" stroke="#d0d0d0" stroke-width="0.9"/></svg>
<div class="t" style="top:605.11px;font-size:7.2px;left:68.00px;">Alpha</div>
<div class="dd" style="position:absolute;left:118.50px;top:603.00px;width:87.90px;height:10.50px;"></div>
<div class="t" style="top:605.01px;font-size:7.2px;left:121.50px;">Straight</div>
<svg style="position:absolute;left:198.80px;top:606.45px" width="5.6" height="4.2"><path d="M1 1L2.8 3.2L4.6 1" fill="none" stroke="#d0d0d0" stroke-width="0.9"/></svg>
<div class="sock p" style="left:58.60px;top:618.60px"></div>
<div class="t" style="top:618.11px;font-size:7.2px;left:68.00px;">Vector</div>
<div class="node" style="position:absolute;left:234.00px;top:456.30px;width:152.00px;height:124.20px;"></div>
<div class="hdr" style="position:absolute;left:234.00px;top:456.30px;width:152.00px;height:11.70px;background:#276a93;position:absolute;"></div>
<svg style="position:absolute;left:240.20px;top:459.50px" width="7.2" height="5"><path d="M1 1L3.6 4L6.2 1" fill="none" stroke="#d0d0d0" stroke-width="0.9"/></svg>
<div class="t" style="top:459.21px;font-size:7.2px;color:#e4edf3;left:249.60px;">Color Ramp</div>
<div class="t" style="top:473.91px;font-size:7.2px;left:79.50px;width:300px;text-align:right;">Color</div>
<div class="sock y" style="left:383.00px;top:474.20px"></div>
<div class="t" style="top:487.21px;font-size:7.2px;left:79.50px;width:300px;text-align:right;">Alpha</div>
<div class="sock g" style="left:383.00px;top:487.60px"></div>
<svg style="position:absolute;left:240px;top:503px" width="50" height="13">
<path d="M6 4V10M3 7H9" stroke="#c8c8c8" stroke-width="0.9"/>
<path d="M20 7H26" stroke="#c8c8c8" stroke-width="0.9"/>
<path d="M40 5.5L42.8 8.3L45.6 5.5" fill="none" stroke="#c8c8c8" stroke-width="0.9"/></svg>
<div class="" style="position:absolute;left:300.60px;top:504.80px;width:39.00px;height:10.00px;background:#262626;border-radius:2px 0 0 2px;"></div>
<div class="t" style="top:506.41px;font-size:7.2px;left:303.60px;">RGB</div>
<svg style="position:absolute;left:332.70px;top:508.10px" width="5.6" height="4.2"><path d="M1 1L2.8 3.2L4.6 1" fill="none" stroke="#d0d0d0" stroke-width="0.9"/></svg>
<div class="" style="position:absolute;left:341.30px;top:504.80px;width:37.40px;height:10.00px;background:#262626;border-radius:0 2px 2px 0;"></div>
<div class="t" style="top:506.41px;font-size:7.2px;left:343.80px;">Linear</div>
<svg style="position:absolute;left:372.20px;top:508.10px" width="5.6" height="4.2"><path d="M1 1L2.8 3.2L4.6 1" fill="none" stroke="#d0d0d0" stroke-width="0.9"/></svg>
<div class="" style="position:absolute;left:243.70px;top:518.90px;width:134.10px;height:12.10px;background:linear-gradient(90deg,#8494cc 0%,#b8c2e0 30%,#eef0f4 62%,#ffffff 68%,#ffffff 100%);"></div>
<svg style="position:absolute;left:238px;top:517px" width="102" height="18">
<path d="M5.3 1.8V7.5" stroke="#ddd" stroke-width="0.8" stroke-dasharray="0.9 0.9"/>
<path d="M2 10.8L5.3 7.6L8.5 10.8Z" fill="#e6e8f0"/>
<rect x="2" y="10.8" width="6.5" height="5.2" fill="#8e9dd0"/>
<path d="M2 10.8V16H8.5V10.8" fill="none" stroke="#1e1e1e" stroke-width="0.5"/>
<path d="M95 1.8V8" stroke="#cfcfcf" stroke-width="0.6"/>
<path d="M91.7 10.2L95 7.3L98.3 10.2Z" fill="#3a3a3a"/>
<rect x="91.7" y="10.2" width="6.6" height="5.6" fill="#ffffff" stroke="#1e1e1e" stroke-width="0.6"/>
</svg>
<div class="fld" style="position:absolute;left:240.80px;top:537.40px;width:39.00px;height:11.60px;"></div>
<div class="t" style="top:540.01px;font-size:7.2px;left:110.30px;width:300px;text-align:center;">0</div>
<div class="fld" style="position:absolute;left:286.00px;top:537.40px;width:93.80px;height:11.60px;"></div>
<div class="t" style="top:540.01px;font-size:7.2px;left:295.50px;">Pos</div>
<div class="t" style="top:540.01px;font-size:7.2px;left:71.30px;width:300px;text-align:right;">0.000</div>
<div class="" style="position:absolute;left:240.80px;top:552.80px;width:139.00px;height:11.50px;background:#7a8dc8;border-radius:2.5px;"></div>
<div class="sock g" style="left:231.30px;top:569.00px"></div>
<div class="t" style="top:568.51px;font-size:7.2px;left:240.80px;">Factor</div>
<div class="node" style="position:absolute;left:415.00px;top:450.80px;width:153.20px;height:300.30px;"></div>
<div class="hdr" style="position:absolute;left:415.00px;top:450.80px;width:153.20px;height:12.20px;background:#2a6f2a;position:absolute;"></div>
<svg style="position:absolute;left:421.20px;top:454.10px" width="7.2" height="5"><path d="M1 1L3.6 4L6.2 1" fill="none" stroke="#d0d0d0" stroke-width="0.9"/></svg>
<div class="t" style="top:453.91px;font-size:7.2px;color:#dcebdc;left:430.50px;">Principled BSDF</div>
<div class="t" style="top:468.41px;font-size:7.2px;left:260.00px;width:300px;text-align:right;">BSDF</div>
<div class="sock gr" style="left:565.20px;top:468.90px"></div>
<div class="sock y" style="left:412.70px;top:481.90px"></div>
<div class="t" style="top:481.41px;font-size:7.2px;left:421.70px;">Base Color</div>
<div class="" style="position:absolute;left:421.70px;top:492.00px;width:139.30px;height:11.60px;background:#545454;border-radius:2.5px;"></div>
<div class="t" style="top:494.41px;font-size:7.2px;left:431.40px;">Metallic</div>
<div class="t" style="top:494.41px;font-size:7.2px;left:252.30px;width:300px;text-align:right;">0.000</div>
<div class="sock g" style="left:412.70px;top:495.00px"></div>
<div class="" style="position:absolute;left:421.70px;top:505.60px;width:139.30px;height:11.60px;background:#545454;border-radius:2.5px;"></div>
<div class="t" style="top:508.01px;font-size:7.2px;left:431.40px;">Roughness</div>
<div class="t" style="top:508.01px;font-size:7.2px;left:252.30px;width:300px;text-align:right;">0.000</div>
<div class="sock g" style="left:412.70px;top:508.60px"></div>
<div class="" style="position:absolute;left:421.70px;top:518.80px;width:139.30px;height:11.60px;background:#545454;border-radius:2.5px;"></div>
<div class="t" style="top:521.21px;font-size:7.2px;left:431.40px;">IOR</div>
<div class="t" style="top:521.21px;font-size:7.2px;left:252.30px;width:300px;text-align:right;">1.000</div>
<div class="sock g" style="left:412.70px;top:521.80px"></div>
<div class="" style="position:absolute;left:421.70px;top:532.30px;width:139.30px;height:11.60px;background:#4772b3;border-radius:2.5px;"></div>
<div class="t" style="top:534.71px;font-size:7.2px;left:431.40px;">Alpha</div>
<div class="t" style="top:534.71px;font-size:7.2px;left:252.30px;width:300px;text-align:right;">1.000</div>
<div class="sock g" style="left:412.70px;top:535.30px"></div>
<div class="sock p" style="left:412.70px;top:548.50px"></div>
<div class="t" style="top:548.01px;font-size:7.2px;left:421.70px;">Normal</div>
<svg style="position:absolute;left:424.10px;top:560.40px" width="4.8" height="7.2"><path d="M1 1L3.8 3.6L1 6.2" fill="none" stroke="#d0d0d0" stroke-width="0.9"/></svg>
<div class="t" style="top:560.71px;font-size:7.2px;left:433.50px;">Diffuse</div>
<svg style="position:absolute;left:422.50px;top:574.20px" width="7" height="4.8"><path d="M1 1L3.5 3.8L6 1" fill="none" stroke="#d0d0d0" stroke-width="0.9"/></svg>
<div class="t" style="top:573.31px;font-size:7.2px;left:433.50px;">Subsurface</div>
<div class="" style="position:absolute;left:415.60px;top:582.80px;width:152.00px;height:95.80px;background:#2a2a2a;"></div>
<div class="dd" style="position:absolute;left:421.70px;top:586.80px;width:139.30px;height:10.60px;"></div>
<div class="t" style="top:588.91px;font-size:7.2px;left:426.00px;">Christensen-Burley</div>
<svg style="position:absolute;left:553.40px;top:590.30px" width="5.6" height="4.2"><path d="M1 1L2.8 3.2L4.6 1" fill="none" stroke="#d0d0d0" stroke-width="0.9"/></svg>
<div class="fld" style="position:absolute;left:421.70px;top:601.20px;width:139.30px;height:10.80px;"></div>
<div class="t" style="top:603.41px;font-size:7.2px;left:431.40px;">Weight</div>
<div class="t" style="top:603.41px;font-size:7.2px;left:252.30px;width:300px;text-align:right;">0.000</div>
<div class="sock g" style="left:412.70px;top:603.70px"></div>
<div class="sock p" style="left:412.70px;top:616.90px"></div>
<div class="t" style="top:616.41px;font-size:7.2px;left:421.70px;">Radius</div>
<div class="fld" style="position:absolute;left:421.70px;top:626.70px;width:139.30px;height:36.00px;"></div>
<div class="t" style="top:629.61px;font-size:7.2px;left:341.10px;width:300px;text-align:center;">25.800</div>
<div class="t" style="top:641.51px;font-size:7.2px;left:341.10px;width:300px;text-align:center;">0.200</div>
<div class="t" style="top:653.31px;font-size:7.2px;left:341.10px;width:300px;text-align:center;">0.100</div>
<div class="fld" style="position:absolute;left:421.70px;top:664.90px;width:139.30px;height:11.00px;"></div>
<div class="t" style="top:667.11px;font-size:7.2px;left:431.40px;">Scale</div>
<div class="t" style="top:667.11px;font-size:7.2px;left:252.30px;width:300px;text-align:right;">0.05 m</div>
<div class="sock g" style="left:412.70px;top:667.50px"></div>
<svg style="position:absolute;left:424.10px;top:681.30px" width="4.8" height="7.2"><path d="M1 1L3.8 3.6L1 6.2" fill="none" stroke="#d0d0d0" stroke-width="0.9"/></svg>
<div class="t" style="top:681.61px;font-size:7.2px;left:433.50px;">Specular</div>
<svg style="position:absolute;left:424.10px;top:693.00px" width="4.8" height="7.2"><path d="M1 1L3.8 3.6L1 6.2" fill="none" stroke="#d0d0d0" stroke-width="0.9"/></svg>
<div class="t" style="top:693.31px;font-size:7.2px;left:433.50px;">Transmission</div>
<svg style="position:absolute;left:424.10px;top:704.80px" width="4.8" height="7.2"><path d="M1 1L3.8 3.6L1 6.2" fill="none" stroke="#d0d0d0" stroke-width="0.9"/></svg>
<div class="t" style="top:705.11px;font-size:7.2px;left:433.50px;">Coat</div>
<svg style="position:absolute;left:424.10px;top:716.60px" width="4.8" height="7.2"><path d="M1 1L3.8 3.6L1 6.2" fill="none" stroke="#d0d0d0" stroke-width="0.9"/></svg>
<div class="t" style="top:716.91px;font-size:7.2px;left:433.50px;">Sheen</div>
<svg style="position:absolute;left:424.10px;top:728.20px" width="4.8" height="7.2"><path d="M1 1L3.8 3.6L1 6.2" fill="none" stroke="#d0d0d0" stroke-width="0.9"/></svg>
<div class="t" style="top:728.51px;font-size:7.2px;left:433.50px;">Emission</div>
<svg style="position:absolute;left:424.10px;top:740.00px" width="4.8" height="7.2"><path d="M1 1L3.8 3.6L1 6.2" fill="none" stroke="#d0d0d0" stroke-width="0.9"/></svg>
<div class="t" style="top:740.31px;font-size:7.2px;left:433.50px;">Thin Film</div>
<div class="node" style="position:absolute;left:768.00px;top:445.00px;width:89.00px;height:85.00px;"></div>
<div class="hdr" style="position:absolute;left:768.00px;top:445.00px;width:89.00px;height:12.20px;background:#3f2427;position:absolute;"></div>
<svg style="position:absolute;left:773.90px;top:448.80px" width="7.2" height="5"><path d="M1 1L3.6 4L6.2 1" fill="none" stroke="#d0d0d0" stroke-width="0.9"/></svg>
<div class="t" style="top:448.41px;font-size:7.2px;color:#e0d8d8;left:783.00px;">Material Output</div>
<div class="dd" style="position:absolute;left:775.00px;top:462.00px;width:75.50px;height:10.60px;"></div>
<div class="t" style="top:464.01px;font-size:7.2px;left:779.00px;">All</div>
<svg style="position:absolute;left:842.90px;top:465.50px" width="5.6" height="4.2"><path d="M1 1L2.8 3.2L4.6 1" fill="none" stroke="#d0d0d0" stroke-width="0.9"/></svg>
<div class="sock gr" style="left:765.20px;top:478.00px"></div>
<div class="t" style="top:477.51px;font-size:7.2px;left:774.70px;">Surface</div>
<div class="sock gr" style="left:765.20px;top:491.20px"></div>
<div class="t" style="top:490.71px;font-size:7.2px;left:774.70px;">Volume</div>
<div class="sock p" style="left:765.20px;top:504.50px"></div>
<div class="t" style="top:504.01px;font-size:7.2px;left:774.70px;">Displacement</div>
<div class="sock g" style="left:765.20px;top:517.70px"></div>
<div class="t" style="top:517.21px;font-size:7.2px;left:774.70px;">Thickness</div>
<div style="position:absolute;left:511px;top:409px;width:52px;height:14px;background:#282828;border-radius:3px"></div>
<div class="t" style="top:412.57px;font-size:7.6px;left:516.50px;">Slot 1</div>
<svg style="position:absolute;left:554.30px;top:414.20px" width="6.4" height="4.6"><path d="M1 1L3.2 3.6L5.4 1" fill="none" stroke="#d0d0d0" stroke-width="0.9"/></svg>
<div style="position:absolute;left:566px;top:409px;width:111px;height:14px;background:#282828;border-radius:3px"></div>
<div style="position:absolute;left:586.6px;top:409.1px;width:51.3px;height:13.7px;background:#1a1a1a;box-shadow:inset 0 0 0 1px #2c2c2c"></div>
<div style="position:absolute;left:638.5px;top:409px;width:39px;height:14px;background:#4d4d4d;border-radius:0 3px 3px 0"></div>
<svg style="position:absolute;left:566px;top:409px" width="130" height="14">
<circle cx="8.7" cy="7" r="4.5" fill="#f0f0f0"/>
<path d="M8.7 2.9A4.1 4.1 0 0 0 4.6 7H8.7Z" fill="#1c1c1c"/><path d="M8.7 7H12.8A4.1 4.1 0 0 1 8.7 11.1Z" fill="#1c1c1c"/>
<circle cx="8.7" cy="7" r="4.5" fill="none" stroke="#cfcfcf" stroke-width="0.6"/>
<path d="M15 5.9L16.6 7.6L18.2 5.9" fill="none" stroke="#cfcfcf" stroke-width="0.8"/>
<path d="M74.2 3L78.5 1.9L82.8 3V6.8C82.8 9 80.8 10.6 78.5 11.4C76.2 10.6 74.2 9 74.2 6.8Z" fill="none" stroke="#a8a8a8" stroke-width="0.75"/>
<path d="M86.8 4.3V10.8H93M89 1.8H93.5L95.6 3.9V8.6H89Z" fill="none" stroke="#e8e8e8" stroke-width="0.85"/>
<path d="M101.3 4L105.5 8.3M105.5 4L101.3 8.3" stroke="#e0e0e0" stroke-width="0.85"/>
<g transform="rotate(45 121.5 6)"><path d="M119.3 1.5H123.7M120.2 1.5V5.2L118.6 7.3H124.4L122.8 5.2V1.5M121.5 7.3V12.5" fill="none" stroke="#b8b8b8" stroke-width="0.75"/></g>
</svg>
<div class="t" style="top:412.57px;font-size:7.6px;left:591.50px;">BG</div>
</div>
</body></html>
